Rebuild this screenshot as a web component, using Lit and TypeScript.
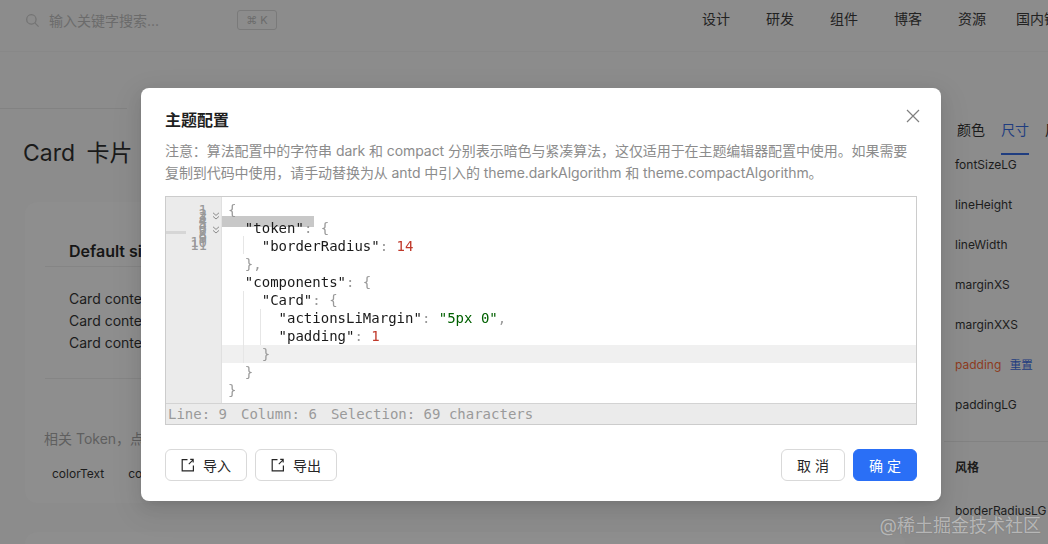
import { LitElement, html, css } from "lit";
import { customElement } from "lit/decorators.js";

const CODE: any[] = [
  [["p", "{"]],
  [["i", "  "], ["k", '"token"'], ["p", ": {"]],
  [["i", "    "], ["k", '"borderRadius"'], ["p", ": "], ["n", "14"]],
  [["i", "  "], ["p", "},"]],
  [["i", "  "], ["k", '"components"'], ["p", ": {"]],
  [["i", "    "], ["k", '"Card"'], ["p", ": {"]],
  [["i", "      "], ["k", '"actionsLiMargin"'], ["p", ": "], ["s", '"5px 0"'], ["p", ","]],
  [["i", "      "], ["k", '"padding"'], ["p", ": "], ["n", "1"]],
  [["i", "    "], ["p", "}"]],
  [["i", "  "], ["p", "}"]],
  [["p", "}"]],
];

const exportIcon = html`<svg class="ico" viewBox="0 0 14 14" fill="none" stroke="currentColor" stroke-width="1.2"><path d="M6.5 1.6H1.2v11.2h11.2V7.6"/><path d="M7.8 6.2l4-4M9.2 1.4h3v3" stroke-width="1.1"/></svg>`;
const fold = html`<svg viewBox="0 0 8 8" fill="none" stroke="#8c8c8c" stroke-width="1"><path d="M1 .8l3 2.6L7 .8M1 4.4L4 7l3-2.6"/></svg>`;

@customElement("app-root")
export class AppRoot extends LitElement {
  static styles = css`
    :host { display: block; position: relative; width: 1048px; height: 544px; overflow: hidden; background: #8c8c8c;
      font-family: Inter, "Noto Sans CJK SC", sans-serif; font-size: 14px; color: #111; }
    .header { height: 52px; box-sizing: border-box; padding-top: 10px; display: flex; align-items: flex-start; border-bottom: 1px solid #888; }
    .vline { width: 1px; height: 20px; background: #868686; margin-left: 8px; }
    .search { display: flex; align-items: center; margin-left: 17px; color: #6b6b6b; width: 252px; height: 20px; flex: none; }
    .search svg { width: 15px; height: 15px; margin-right: 9px; }
    .search span.ph { flex: 1; font-size: 14px; white-space: nowrap; }
    .kbd { width: 40px; height: 20px; flex: none; box-sizing: border-box; border: 1px solid #7a7a7a; border-radius: 3px; font-size: 11px; display: flex; align-items: center; justify-content: center; color: #6b6b6b; }
    .nav { display: flex; margin-left: 425px; margin-top: -1px; line-height: 20px; gap: 36px; white-space: nowrap; color: #222; }
    .nav .last { margin-left: -6px; }
    .sub { height: 56px; }
    .rule { height: 1px; background: #828282; width: 127px; }
    .main { display: flex; }
    .left { width: 941px; flex: none; }
    .title { font-size: 23px; line-height: 32px; margin: 28px 0 0 23px; color: #1a1a1a; word-spacing: 5px; }
    .panel { margin: 33px 0 0 25px; height: 301px; width: 880px; background: #8e8e8e; border-radius: 12px; box-sizing: border-box; padding-top: 36px; }
    .card { margin-left: 20px; width: 800px; display: flex; flex-direction: column; }
    .card-h { padding-left: 24px; font-weight: 600; font-size: 16px; line-height: 26px; height: 28px; border-bottom: 1px solid #858585; color: #161616; }
    .card-b { padding: 21px 24px 0; line-height: 22px; color: #1c1c1c; height: 90px; border-bottom: 1px solid #858585; }
    .tok { margin: 49px 0 0 19px; color: #5f5f5f; line-height: 22px; }
    .chips { margin: 14px 0 0 27px; display: flex; gap: 24px; font-size: 12px; line-height: 20px; color: #1c1c1c; }
    .panel2 { margin: 29px 0 0 25px; height: 60px; width: 880px; background: #8e8e8e; border-radius: 12px; }
    .right { flex: 1; white-space: nowrap; font-size: 12px; color: #1c1c1c; min-width: 0; }
    .tabs { display: flex; gap: 16px; margin-left: 16px; height: 40px; margin-bottom: 6px; align-items: center; font-size: 14px; color: #1a1a1a; }
    .tabs .on { color: #1f3d80; position: relative; }
    .tabs .on::after { content: ""; position: absolute; left: 0; right: 0; top: 34px; height: 2px; background: #1f3d80; }
    .item { height: 40px; line-height: 20px; padding-left: 14px; box-sizing: border-box; }
    .item.red { color: #8d3b1d; }
    .item a { color: #1f3d80; margin-left: 5px; font-size: 11.5px; }
    .hr { height: 1px; background: #828282; margin-top: 6px; margin-left: 3px; }
    .sect { font-weight: 600; margin: 15px 0 22px 14px; line-height: 22px; }
    .overlay { position: absolute; inset: 0; }
    .modal { position: absolute; left: 141px; top: 88px; width: 800px; height: 413px; box-sizing: border-box; background: #fff; border-radius: 8px; padding: 20px 24px; display: flex; flex-direction: column;
      box-shadow: 0 6px 16px rgba(0,0,0,.08), 0 3px 6px -4px rgba(0,0,0,.12), 0 9px 28px 8px rgba(0,0,0,.05); }
    .m-title { font-size: 16px; font-weight: 600; line-height: 24px; color: #1f1f1f; }
    .close { position: absolute; top: 21px; right: 21px; width: 14px; height: 14px; color: #7f7f7f; }
    .desc { margin-top: 8px; line-height: 22px; color: #8c8c8c; font-size: 14px; letter-spacing: -.08px; }
    .editor { margin-top: 12px; height: 229px; box-sizing: border-box; border: 1px solid #ccc; display: flex; flex-direction: column; font-family: "DejaVu Sans Mono", monospace; font-size: 14px; position: relative; }
    .ed-body { flex: 1; display: flex; min-height: 0; }
    .gutter { width: 56px; flex: none; background: #ebebeb; position: relative; border-right: 1px solid #e0e0e0; box-sizing: border-box; }
    .nums { position: absolute; right: 14px; top: 12px; font-size: 14px; line-height: 3.5px; color: #999; text-align: right; white-space: nowrap; }
    .f1, .f2 { position: absolute; left: 46px; width: 8px; height: 8px; }
    .f1 { top: 15px; } .f2 { top: 29px; }
    .f1 svg, .f2 svg { display: block; }
    .gmark { position: absolute; left: 0; top: 34px; width: 20px; height: 3px; background: #d6d6d6; }
    .code { flex: 1; position: relative; padding-top: 4px; will-change: transform; }
    .ln { position: relative; height: 18px; line-height: 18px; padding-left: 6px; white-space: pre; color: #1a1a1a; }
    .ln.active { background: #f0f0f0; }
    .p { color: #999; } .k { color: #1a1a1a; } .n { color: #c0392b; } .s { color: #006000; }
    .sel { position: absolute; left: 0; top: 19px; width: 92px; height: 11px; background: #c8c8c8; }
    .guide { position: absolute; width: 1px; background: #e6e6e6; z-index: 1; }
    .g1 { left: 21px; top: 39px; height: 18px; }
    .g2 { left: 21px; top: 94px; height: 72px; }
    .g3 { left: 38px; top: 112px; height: 36px; }
    .status { height: 20px; flex: none; background: #ebebeb; border-top: 1px solid #d3d3d3; line-height: 21px; padding-left: 2px; color: #9a9a9a; white-space: pre; display: flex; gap: 14px; }
    .foot { margin-top: 24px; display: flex; gap: 8px; }
    .btn { height: 32px; box-sizing: border-box; border: 1px solid #d9d9d9; border-radius: 6px; background: #fff; display: flex; align-items: center; justify-content: center; font-size: 14px; color: #262626; white-space: pre; }
    .wide { width: 82px; gap: 8px; }
    .narrow { width: 64px; }
    .primary { background: #2a6ff6; border-color: #2a6ff6; color: #fff; }
    .spacer { flex: 1; }
    .ico { width: 14px; height: 14px; }
    .wm { position: absolute; right: 7px; bottom: 7px; font-size: 18px; line-height: 22px; color: rgba(255,255,255,.5); white-space: nowrap; text-shadow: 0 0 1px rgba(0,0,0,.25); }
  `;

  render() {
    return html`
      <div class="header">
        <div class="vline"></div>
        <div class="search">
          <svg viewBox="0 0 16 16" fill="none" stroke="#737373" stroke-width="1.3"><circle cx="6.8" cy="6.8" r="5"/><path d="M10.5 10.5l4 4"/></svg>
          <span class="ph">输入关键字搜索...</span>
          <span class="kbd">⌘ K</span>
        </div>
        <nav class="nav"><span>设计</span><span>研发</span><span>组件</span><span>博客</span><span>资源</span><span class="last">国内镜像</span></nav>
      </div>
      <div class="sub"></div>
      <div class="rule"></div>
      <div class="main">
        <div class="left">
          <div class="title">Card 卡片</div>
          <div class="panel">
            <div class="card">
              <div class="card-h">Default size card</div>
              <div class="card-b"><div>Card content</div><div>Card content</div><div>Card content</div></div>
            </div>
            <div class="tok">相关 Token，点击查看</div>
            <div class="chips"><span>colorText</span><span>colorBg</span></div>
          </div>
          <div class="panel2"></div>
        </div>
        <div class="right">
          <div class="tabs"><span>颜色</span><span class="on">尺寸</span><span>风格</span></div>
          <div class="item">fontSizeLG</div>
          <div class="item">lineHeight</div>
          <div class="item">lineWidth</div>
          <div class="item">marginXS</div>
          <div class="item">marginXXS</div>
          <div class="item red">padding <a>重置</a></div>
          <div class="item">paddingLG</div>
          <div class="hr"></div>
          <div class="sect">风格</div>
          <div class="item">borderRadiusLG</div>
        </div>
      </div>
      <div class="overlay">
        <div class="modal">
          <div class="m-title">主题配置</div>
          <svg class="close" viewBox="0 0 14 14" fill="none" stroke="currentColor" stroke-width="1.2"><path d="M1 1l12 12M13 1L1 13"/></svg>
          <div class="desc">注意：算法配置中的字符串 dark 和 compact 分别表示暗色与紧凑算法，这仅适用于在主题编辑器配置中使用。如果需要复制到代码中使用，请手动替换为从 antd 中引入的 theme.darkAlgorithm 和 theme.compactAlgorithm。</div>
          <div class="editor">
            <div class="ed-body">
              <div class="gutter">
                <div class="gmark"></div>
                <div class="nums">1<br>2<br>3<br>4<br>5<br>6<br>7<br>8<br>9<br>10<br>11</div>
                <div class="f1">${fold}</div><div class="f2">${fold}</div>
              </div>
              <div class="code">
                <div class="sel"></div>
                ${CODE.map((l, i) => html`<div class="ln ${i === 8 ? "active" : ""}">${l.map((t: string[]) => html`<span class=${t[0]}>${t[1]}</span>`)}</div>`)}
                <div class="guide g1"></div><div class="guide g2"></div><div class="guide g3"></div>
              </div>
            </div>
            <div class="status"><span>Line: 9</span><span>Column: 6</span><span>Selection: 69 characters</span></div>
          </div>
          <div class="foot">
            <div class="btn wide">${exportIcon}<span>导入</span></div>
            <div class="btn wide">${exportIcon}<span>导出</span></div>
            <div class="spacer"></div>
            <div class="btn narrow">取 消</div>
            <div class="btn narrow primary">确 定</div>
          </div>
        </div>
        <div class="wm">@稀土掘金技术社区</div>
      </div>
    `;
  }
}
